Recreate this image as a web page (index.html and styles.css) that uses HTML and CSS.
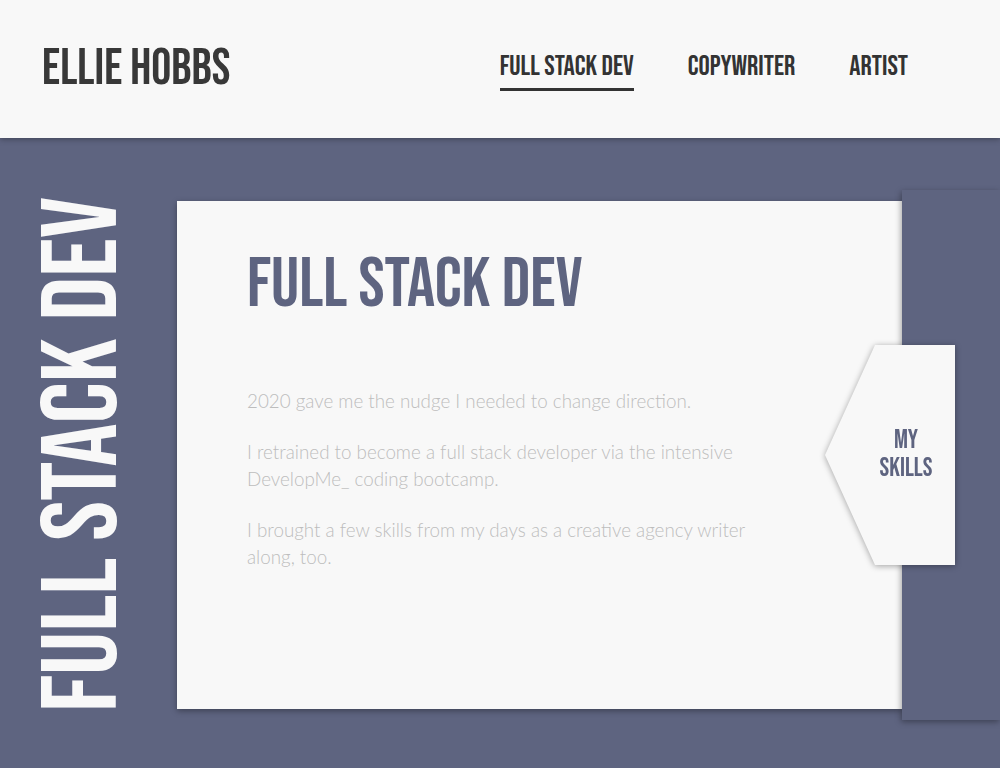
FILE: index.html
```html
<!DOCTYPE html>
<html>
<head>
<meta charset="utf-8">
<link rel="stylesheet" href="styles.css">
</head>
<body>
<header class="site-header">
  <div class="logo display">ELLIE HOBBS</div>
  <nav class="nav">
    <a class="nav-item display active">FULL STACK DEV</a>
    <a class="nav-item display">COPYWRITER</a>
    <a class="nav-item display">ARTIST</a>
  </nav>
</header>
<main class="main">
  <div class="side-title display">FULL STACK DEV</div>
  <section class="card">
    <h1 class="card-title display">FULL STACK DEV</h1>
    <div class="card-body">
      <p>2020 gave me the nudge I needed to change direction.</p>
      <p>I retrained to become a full stack developer via the intensive DevelopMe_ coding bootcamp.</p>
      <p>I brought a few skills from my days as a creative agency writer along, too.</p>
    </div>
  </section>
  <aside class="side-panel">
    <div class="tab-wrap">
      <div class="tab display">MY<br>SKILLS</div>
    </div>
  </aside>
</main>
</body>
</html>
```
FILE: styles.css
```css
html, body { margin: 0; padding: 0; }
body {
  background: #5e6480;
  width: 1000px;
  height: 768px;
  overflow: hidden;
  font-family: "Lato", "Liberation Sans", sans-serif;
}
.display {
  font-family: "Bebas Neue", "Noto Sans", sans-serif;
  font-stretch: 62.5%;
  font-weight: 400;
  letter-spacing: 0;
}
.site-header {
  position: relative;
  z-index: 3;
  height: 138px;
  box-sizing: border-box;
  background: #f8f8f8;
  box-shadow: 0 1px 6px rgba(0,0,0,0.35);
  display: flex;
  align-items: center;
  justify-content: space-between;
  padding: 0 92px 0 42px;
}
.logo {
  font-size: 50px;
  line-height: 1;
  color: #383838;
}
.nav {
  display: flex;
  gap: 54px;
  align-items: center;
}
.nav-item {
  font-size: 28px;
  line-height: 1;
  color: #333;
  padding-top: 6px;
  padding-bottom: 7px;
  border-bottom: 3px solid transparent;
}
.nav-item.active { border-bottom-color: #333; }
.main {
  height: 630px;
  box-sizing: border-box;
  padding-top: 4px;
  display: flex;
  align-items: center;
}
.side-title {
  writing-mode: vertical-rl;
  transform: rotate(180deg);
  font-size: 107.5px;
  line-height: 78px;
  width: 78px;
  color: #f8f8f8;
  margin: 0 54px 0 45px;
  text-align: center;
  white-space: nowrap;
}
.card {
  position: relative;
  z-index: 1;
  width: 725px;
  height: 508px;
  box-sizing: border-box;
  background: #f8f8f8;
  box-shadow: 0 2px 6px rgba(0,0,0,0.35);
  padding: 42px 70px 0 70px;
}
.card-title {
  margin: 0;
  font-size: 70px;
  line-height: 84px;
  color: #5e6480;
  font-weight: 400;
}
.card-body {
  margin-top: 60px;
  width: 510px;
  color: #bdbdbd;
  font-weight: 300;
  font-size: 18.8px;
  line-height: 27px;
}
.card-body p { margin: 0 0 24px 0; }
.side-panel {
  position: relative;
  z-index: 2;
  width: 98px;
  height: 530px;
  background: #5e6480;
  box-shadow: -1px 2px 6px rgba(0,0,0,0.35);
}
.tab-wrap {
  position: absolute;
  left: -77px;
  top: 155px;
  filter: drop-shadow(0 1px 3px rgba(0,0,0,0.35));
}
.tab {
  width: 130px;
  height: 220px;
  box-sizing: border-box;
  padding-left: 32px;
  background: #f8f8f8;
  clip-path: polygon(50px 0, 130px 0, 130px 220px, 50px 220px, 0 110px);
  display: flex;
  align-items: center;
  justify-content: center;
  text-align: center;
  font-size: 26px;
  line-height: 28px;
  color: #5e6480;
}
```
